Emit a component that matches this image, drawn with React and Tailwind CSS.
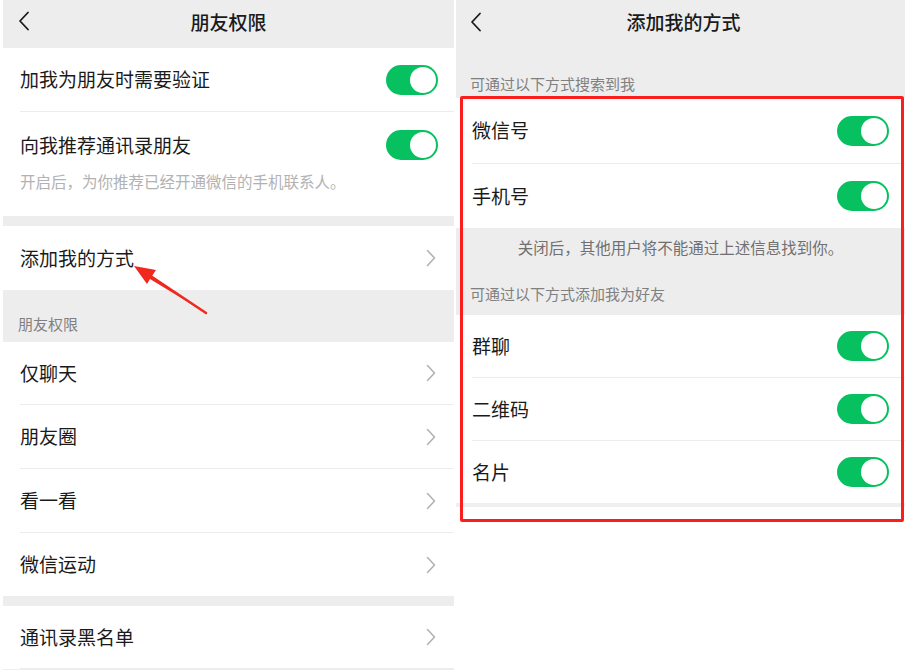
import React from 'react';

const font = { fontFamily: '"Noto Sans CJK SC", "Noto Sans", sans-serif' };

function Toggle() {
    return (
        <div className="w-[52px] h-[30px] rounded-full bg-[#07c160] flex items-center justify-end pr-[2px]">
            <div className="w-[26px] h-[26px] rounded-full bg-white" />
        </div>
    );
}

function Chevron() {
    return (
        <svg width="10" height="18" viewBox="0 0 10 18" fill="none" className="shrink-0">
            <path d="M1.5 1.5 L8.5 9 L1.5 16.5" stroke="#b2b2b2" strokeWidth="1.6" strokeLinecap="round" strokeLinejoin="round" />
        </svg>
    );
}

function Back() {
    return (
        <svg width="12" height="20" viewBox="0 0 12 20" fill="none">
            <path d="M10 1.5 L2 10 L10 18.5" stroke="#1a1a1a" strokeWidth="1.8" strokeLinecap="round" strokeLinejoin="round" />
        </svg>
    );
}

function Row({ label, toggle, h = 'h-[64px]', line = true, pad = 'pl-[17px]' }) {
    return (
        <div className={`${pad} bg-white`}>
            <div className={`${h} flex items-center justify-between pr-[16px] ${line ? 'border-b border-[#ececec]' : ''}`}>
                <span className="text-[19px] text-[#1a1a1a]">{label}</span>
                {toggle ? <Toggle /> : <div className="pr-[2px]"><Chevron /></div>}
            </div>
        </div>
    );
}

export default function App() {
    return (
        <div className="relative w-[912px] h-[670px] bg-white overflow-hidden flex" style={font}>
            {/* left: 朋友权限 */}
            <div className="ml-[3px] w-[451px] flex flex-col bg-[#ededed]">
                <div className="h-[48px] relative flex items-center justify-center pb-[4px]">
                    <div className="absolute left-[15px] top-[11px]"><Back /></div>
                    <span className="text-[19px] font-medium text-[#1a1a1a]">朋友权限</span>
                </div>
                <Row label="加我为朋友时需要验证" toggle />
                <div className="pl-[17px] bg-white h-[104px] flex flex-col">
                    <div className="h-[66px] flex items-center justify-between pr-[16px]">
                        <span className="text-[19px] text-[#1a1a1a]">向我推荐通讯录朋友</span>
                        <Toggle />
                    </div>
                    <span className="text-[15.5px] text-[#b2b2b2] leading-none -mt-[4px]">开启后，为你推荐已经开通微信的手机联系人。</span>
                </div>
                <div className="h-[10px]" />
                <Row label="添加我的方式" line={false} />
                <div className="h-[52px] flex items-end pl-[15px] pb-[7px]">
                    <span className="text-[15px] text-[#808080]">朋友权限</span>
                </div>
                <Row label="仅聊天" h="h-[63px]" />
                <Row label="朋友圈" h="h-[64px]" />
                <Row label="看一看" h="h-[64px]" />
                <Row label="微信运动" h="h-[63px]" line={false} />
                <div className="h-[10px]" />
                <Row label="通讯录黑名单" h="h-[63px]" />
            </div>

            {/* right: 添加我的方式 */}
            <div className="ml-[2px] w-[449px] flex flex-col bg-white">
                <div className="bg-[#ededed]">
                    <div className="h-[44px] relative flex items-center justify-center">
                        <div className="absolute left-[14px] top-[12px]"><Back /></div>
                        <span className="text-[19px] font-medium text-[#1a1a1a] pl-[6px]">添加我的方式</span>
                    </div>
                    <div className="h-[54px] flex items-center pl-[14px] pt-[26px]">
                        <span className="text-[15px] text-[#808080]">可通过以下方式搜索到我</span>
                    </div>
                </div>
                <Row label="微信号" toggle h="h-[66px]" pad="pl-[16px]" />
                <Row label="手机号" toggle h="h-[64px]" line={false} pad="pl-[16px]" />
                <div className="bg-[#ededed] h-[87px] flex flex-col">
                    <div className="h-[40px] flex items-center justify-center">
                        <span className="text-[15.5px] text-[#707070]">关闭后，其他用户将不能通过上述信息找到你。</span>
                    </div>
                    <div className="flex-1 flex items-center pl-[14px] pt-[6px]">
                        <span className="text-[15px] text-[#808080]">可通过以下方式添加我为好友</span>
                    </div>
                </div>
                <Row label="群聊" toggle h="h-[63px]" pad="pl-[16px]" />
                <Row label="二维码" toggle h="h-[63px]" pad="pl-[16px]" />
                <Row label="名片" toggle h="h-[62px]" line={false} pad="pl-[16px]" />
                <div className="h-[4px] bg-[#efefef]" />
            </div>

            {/* annotations */}
            <div className="absolute left-[460px] top-[96px] w-[444px] h-[426px] border-[3px] border-[#fa1e1e] rounded-[2px] pointer-events-none" />
            <svg className="absolute left-0 top-0 pointer-events-none" width="912" height="670">
                <path d="M206 313 L152 276 L156 270 L134 266 L147 284 L150 279 Z" fill="#f0281e" />
                <path d="M206 313 L152 277" stroke="#f0281e" strokeWidth="2.5" strokeLinecap="round" />
            </svg>
        </div>
    );
}
